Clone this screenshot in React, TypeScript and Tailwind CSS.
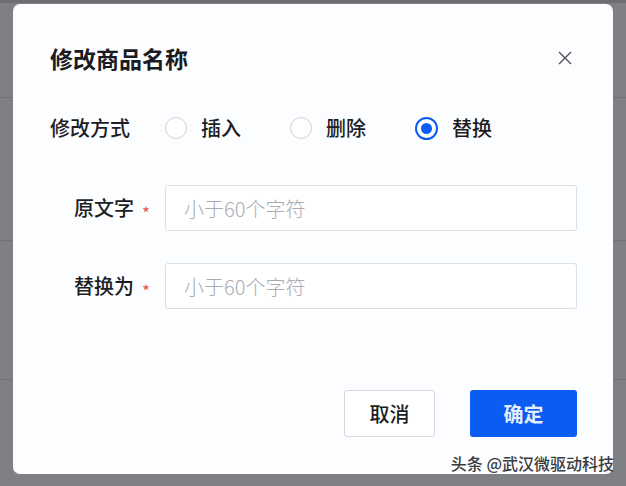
import { useState } from 'react';

// Modal for renaming products: choose insert / delete / replace, then fill the two fields.

const MODES = ['插入', '删除', '替换'] as const;
type Mode = (typeof MODES)[number];

function Radio({ label, checked, onSelect }: { label: string; checked: boolean; onSelect: () => void }) {
  return (
    <button type="button" onClick={onSelect} className="flex items-center gap-[14px]">
      {checked ? (
        <span className="flex h-[23px] w-[23px] items-center justify-center rounded-full border-2 border-[#0b5cf0] bg-white">
          <span className="h-[11px] w-[11px] rounded-full bg-[#0b5cf0]" />
        </span>
      ) : (
        <span className="h-[22px] w-[22px] rounded-full border border-[#cfd2d8] bg-white" />
      )}
      <span className="text-[20px] font-medium leading-[32px] text-[#1d1d24]">{label}</span>
    </button>
  );
}

function Field({ label }: { label: string }) {
  return (
    <div className="flex items-center">
      <div className="flex w-[115px] items-center justify-end pr-[15px]">
        <span className="text-[20px] font-medium leading-[32px] text-[#1d1d24]">{label}</span>
        <span className="ml-[8px] mt-[8px] text-[17px] leading-none text-[#e5574f]">*</span>
      </div>
      <input
        placeholder="小于60个字符"
        className="h-[46px] w-[412px] rounded-[3px] border border-[#dcdfe5] bg-white pl-[18px] text-[20px] font-light text-[#1d1d24] outline-none placeholder:text-[#a9abb1]"
      />
    </div>
  );
}

export default function App() {
  const [mode, setMode] = useState<Mode>('替换');

  return (
    <div
      className="relative h-[486px] w-[626px] overflow-hidden bg-[#7e8084]"
      style={{ fontFamily: '"Noto Sans CJK SC", "Noto Sans", sans-serif' }}
    >
      {/* page behind the overlay */}
      <div className="flex flex-col">
        <div className="h-[3px] bg-[#6c6e71]" />
        <div className="h-[95px] border-b border-[#707276]" />
        <div className="h-[143px] border-b border-[#707276]" />
        <div className="h-[139px] border-b border-[#707276]" />
      </div>

      {/* dialog */}
      <div className="absolute left-[13px] top-[4px] flex h-[470px] w-[600px] flex-col rounded-[7px] bg-[#fcfdfe] pl-[37px] pr-[36px] pt-[38px]">
        <div className="flex h-[32px] items-center justify-between pr-[5px]">
          <h2 className="text-[23px] font-bold leading-[32px] text-[#1b1b22]">修改商品名称</h2>
          <svg width="14" height="14" viewBox="0 0 14 14" className="text-[#4a4c52]">
            <path d="M1 1L13 13M13 1L1 13" stroke="currentColor" strokeWidth="1.3" />
          </svg>
        </div>

        <div className="mt-[38px] flex h-[32px] items-center">
          <span className="w-[115px] text-[20px] font-medium leading-[32px] text-[#1d1d24]">修改方式</span>
          <div className="flex items-center gap-[49px]">
            {MODES.map((m) => (
              <Radio key={m} label={m} checked={mode === m} onSelect={() => setMode(m)} />
            ))}
          </div>
        </div>

        <div className="mt-[41px] flex flex-col gap-[32px]">
          <Field label="原文字" />
          <Field label="替换为" />
        </div>

        <div className="mt-auto mb-[37px] flex justify-end gap-[35px]">
          <button className="h-[47px] w-[91px] rounded-[3px] border border-[#d5d8de] bg-white text-[20px] font-medium text-[#1d1d24]">
            取消
          </button>
          <button className="h-[47px] w-[107px] rounded-[3px] bg-[#0b5cf2] text-[20px] font-bold text-[#e3edff]">
            确定
          </button>
        </div>
      </div>

      {/* watermark */}
      <div className="absolute right-[12px] top-[452px] text-[16px] font-medium leading-[22px] text-[#3a3b3f]">
        头条 @武汉微驱动科技
      </div>
    </div>
  );
}
